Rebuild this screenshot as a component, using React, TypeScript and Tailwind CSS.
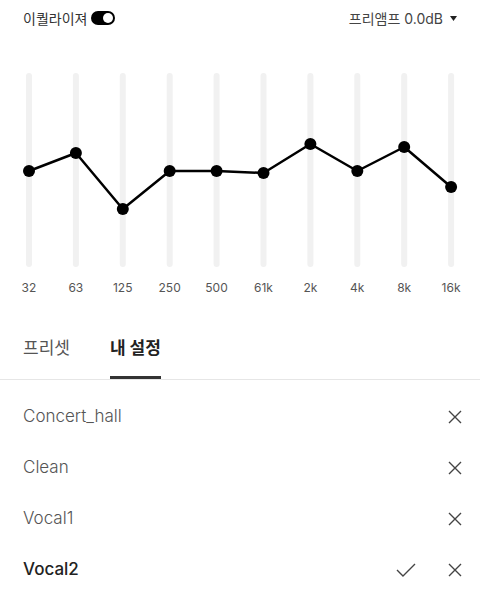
import React from 'react';

const bands = [
  { label: '32', y: 111 },
  { label: '63', y: 93 },
  { label: '125', y: 149 },
  { label: '250', y: 111 },
  { label: '500', y: 111 },
  { label: '61k', y: 113 },
  { label: '2k', y: 84 },
  { label: '4k', y: 111 },
  { label: '8k', y: 87 },
  { label: '16k', y: 127 },
];

const presets = [
  { name: 'Concert_hall', active: false },
  { name: 'Clean', active: false },
  { name: 'Vocal1', active: false },
  { name: 'Vocal2', active: true },
];

const bandX = (i: number) => 29 + i * 46.9;

const CloseIcon = () => (
  <svg width="14" height="14" viewBox="0 0 14 14" className="text-[#444]">
    <path d="M1 1 L13 13 M13 1 L1 13" stroke="currentColor" strokeWidth="1.4" fill="none" />
  </svg>
);

const CheckIcon = () => (
  <svg width="20" height="14" viewBox="0 0 20 14" className="text-[#444]">
    <path d="M1 7 L7 13 L19 1" stroke="currentColor" strokeWidth="1.4" fill="none" />
  </svg>
);

const App: React.FC = () => {
  const points = bands.map((b, i) => `${bandX(i)},${b.y}`).join(' ');

  return (
    <div className="w-[480px] h-[590px] bg-white overflow-hidden font-['Inter','Noto_Sans_CJK_KR',sans-serif]">
      {/* header */}
      <div className="h-[36px] px-[23px] flex items-center justify-between">
        <div className="flex items-center gap-[4px]">
          <span className="text-[14px] text-[#333]">이퀄라이져</span>
          <div className="w-[24px] h-[14px] rounded-full bg-black flex items-center justify-end pr-[2px]">
            <div className="w-[10px] h-[10px] rounded-full bg-white" />
          </div>
        </div>
        <div className="flex items-center gap-[7px]">
          <span className="text-[14px] text-[#444]">프리앰프 0.0dB</span>
          <svg width="7" height="5" viewBox="0 0 7 5">
            <path d="M0 0 L7 0 L3.5 5 Z" fill="#222" />
          </svg>
        </div>
      </div>

      {/* chart */}
      <svg width="480" height="212" viewBox="0 0 480 212" className="mt-[24px] block">
        {bands.map((_, i) => (
          <line
            key={i}
            x1={bandX(i)}
            x2={bandX(i)}
            y1={16}
            y2={204}
            stroke="#f1f1f1"
            strokeWidth={6}
            strokeLinecap="round"
          />
        ))}
        <polyline points={points} fill="none" stroke="#000" strokeWidth={2.5} strokeLinejoin="round" />
        {bands.map((b, i) => (
          <circle key={i} cx={bandX(i)} cy={b.y} r={6} fill="#000" />
        ))}
      </svg>

      <div className="mt-[8px] grid grid-cols-10 px-[5.5px]">
        {bands.map((b) => (
          <span key={b.label} className="text-center text-[12px] leading-[16px] text-[#555]">
            {b.label}
          </span>
        ))}
      </div>

      {/* tabs */}
      <div className="mt-[22px] h-[62px] flex items-center gap-[40px] px-[23px] border-b border-[#e6e6e6]">
        <span className="text-[17px] text-[#555]">프리셋</span>
        <div className="relative h-full flex items-center">
          <span className="text-[17px] font-bold text-[#222]">내 설정</span>
          <div className="absolute left-0 right-0 bottom-0 h-[3px] bg-[#333]" />
        </div>
      </div>

      {/* preset list */}
      <div className="pt-[11px]">
        {presets.map((p) => (
          <div key={p.name} className="h-[51px] flex items-center pl-[23px] pr-[18px]">
            <span className={`flex-1 text-[17px] ${p.active ? 'font-medium text-[#222]' : 'font-light text-[#555]'}`}>
              {p.name}
            </span>
            {p.active && (
              <div className="mr-[32px] flex items-center">
                <CheckIcon />
              </div>
            )}
            <CloseIcon />
          </div>
        ))}
      </div>
    </div>
  );
};

export default App;
